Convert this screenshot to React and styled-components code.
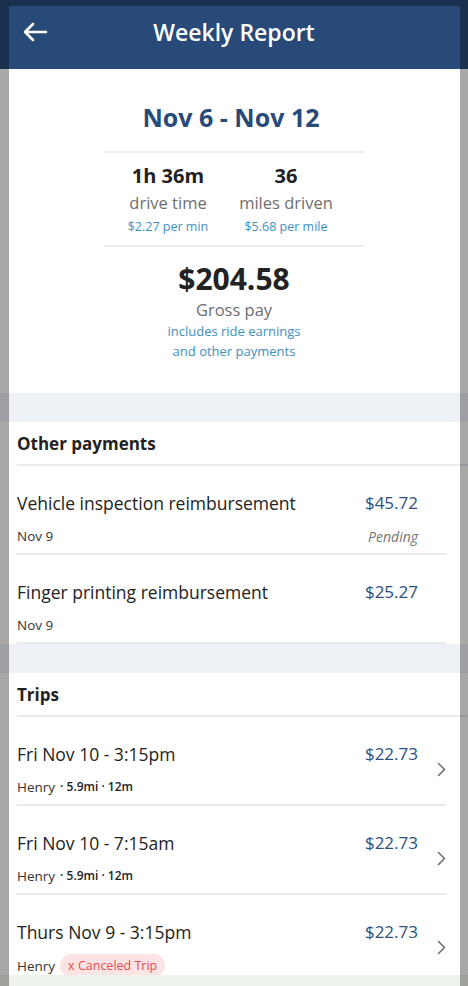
import React from 'react';
import styled, { createGlobalStyle } from 'styled-components';

const GlobalStyle = createGlobalStyle`
  html, body {
    margin: 0;
    padding: 0;
    background: #ffffff;
    font-family: 'Open Sans', 'Noto Sans', sans-serif;
    -webkit-font-smoothing: antialiased;
  }
  * { box-sizing: border-box; }
`;

const Page = styled.div`
  width: 468px;
  min-height: 986px;
  background: #ffffff;
  display: flex;
  flex-direction: column;
`;

const Header = styled.header`
  height: 69px;
  padding-bottom: 6px;
  background: #284a78;
  display: flex;
  align-items: center;
`;

const BackButton = styled.button`
  border: 0;
  background: none;
  padding: 0;
  margin-left: 22px;
  width: 26px;
  height: 26px;
  display: flex;
  align-items: center;
  justify-content: center;
  cursor: pointer;
`;

const HeaderTitle = styled.h1`
  flex: 1;
  margin: 0 48px 0 0;
  text-align: center;
  color: #ffffff;
  font-size: 23px;
  font-weight: 600;
`;

const Summary = styled.section`
  display: flex;
  flex-direction: column;
  align-items: center;
  padding: 31px 0 32px;
`;

const DateRange = styled.h2`
  margin: 0 6px 17px 0;
  color: #284a78;
  font-size: 25px;
  font-weight: 700;
  line-height: 34px;
`;

const Divider = styled.div`
  width: 260px;
  height: 2px;
  background: #eceef1;
`;

const Stats = styled.div`
  display: flex;
  justify-content: center;
  gap: 14px;
  padding: 10px 14px 8px 0;
  width: 260px;
`;

const Stat = styled.div`
  display: flex;
  flex-direction: column;
  align-items: center;
  width: 104px;
`;

const StatValue = styled.div`
  font-size: 20px;
  font-weight: 700;
  color: #222222;
  line-height: 26px;
`;

const StatLabel = styled.div`
  font-size: 16.5px;
  font-weight: 500;
  color: #6e6e6e;
  line-height: 28px;
`;

const Note = styled.div`
  font-size: ${p => (p.$small ? '12.5px' : '13px')};
  color: #3d8fc2;
  line-height: 20px;
`;

const GrossValue = styled.div`
  margin-top: 12px;
  font-size: 30px;
  font-weight: 700;
  color: #222222;
  line-height: 40px;
`;

const GrossLabel = styled.div`
  font-size: 16.5px;
  font-weight: 500;
  color: #6e6e6e;
  line-height: 22px;
`;

const Band = styled.div`
  height: 29px;
  background: #eef2f7;
`;

const SectionTitle = styled.h3`
  margin: 0 0 0 17px;
  height: 44px;
  display: flex;
  align-items: center;
  font-size: 17px;
  font-weight: 700;
  color: #222222;
  border-bottom: 2px solid #e8eaee;
`;

const Row = styled.div`
  margin: 0 22px 0 17px;
  height: 89px;
  padding-top: 25px;
  display: flex;
  align-items: flex-start;
  border-bottom: ${p => (p.$last ? 'none' : '2px solid #e8eaee')};
`;

const RowBody = styled.div`
  flex: 1;
  display: flex;
  flex-direction: column;
  gap: 10px;
`;

const Line = styled.div`
  display: flex;
  justify-content: space-between;
  align-items: center;
`;

const RowTitle = styled.div`
  font-size: 17.5px;
  color: #222222;
  line-height: 24px;
`;

const Amount = styled.div`
  font-size: 17px;
  color: #2c4f80;
  line-height: 24px;
`;

const SubText = styled.div`
  font-size: 13.5px;
  color: #333333;
  line-height: 22px;
  display: flex;
  align-items: center;
  gap: 5px;
`;

const Meta = styled.span`
  font-size: 12px;
  font-weight: 600;
  color: #222222;
`;

const Status = styled.div`
  font-size: 14px;
  font-style: italic;
  color: #767676;
`;

const Badge = styled.span`
  background: #fde3e3;
  color: #ec4b4e;
  border-radius: 12px;
  padding: 2px 8px;
  font-size: 12.5px;
  line-height: 19px;
`;

const Chevron = styled.div`
  width: 9px;
  margin-left: 19px;
  margin-top: 20px;
  display: flex;
  justify-content: flex-end;
`;

const Dim = styled.div`
  position: fixed;
  inset: 0;
  pointer-events: none;
  border-style: solid;
  border-color: rgba(0, 0, 0, 0.34);
  border-width: 6px 8px 0 9px;
`;

const BottomSheet = styled.div`
  position: fixed;
  left: 0;
  right: 0;
  bottom: 0;
  height: 11px;
  background: #eef3ec;
`;

const payments = [
  { title: 'Vehicle inspection reimbursement', amount: '$45.72', date: 'Nov 9', status: 'Pending' },
  { title: 'Finger printing reimbursement', amount: '$25.27', date: 'Nov 9' },
];

const trips = [
  { title: 'Fri Nov 10 - 3:15pm', amount: '$22.73', rider: 'Henry', meta: '· 5.9mi · 12m' },
  { title: 'Fri Nov 10 - 7:15am', amount: '$22.73', rider: 'Henry', meta: '· 5.9mi · 12m' },
  { title: 'Thurs Nov 9 - 3:15pm', amount: '$22.73', rider: 'Henry', canceled: true },
];

const ArrowLeft = () => (
  <svg width="26" height="20" viewBox="0 0 26 20" fill="none">
    <path d="M24 10H3M11 2L3 10l8 8" stroke="#fff" strokeWidth="2.6" strokeLinecap="round" strokeLinejoin="round" />
  </svg>
);

const ChevronRight = () => (
  <svg width="9" height="15" viewBox="0 0 9 15" fill="none">
    <path d="M1.5 1.5l6 6-6 6" stroke="#6f6f6f" strokeWidth="1.6" strokeLinecap="round" strokeLinejoin="round" />
  </svg>
);

export default function App() {
  return (
    <>
      <GlobalStyle />
      <Page>
        <Header>
          <BackButton aria-label="back">
            <ArrowLeft />
          </BackButton>
          <HeaderTitle>Weekly Report</HeaderTitle>
        </Header>

        <Summary>
          <DateRange>Nov 6 - Nov 12</DateRange>
          <Divider />
          <Stats>
            <Stat>
              <StatValue>1h 36m</StatValue>
              <StatLabel>drive time</StatLabel>
              <Note $small>$2.27 per min</Note>
            </Stat>
            <Stat>
              <StatValue>36</StatValue>
              <StatLabel>miles driven</StatLabel>
              <Note $small>$5.68 per mile</Note>
            </Stat>
          </Stats>
          <Divider />
          <GrossValue>$204.58</GrossValue>
          <GrossLabel>Gross pay</GrossLabel>
          <Note>includes ride earnings</Note>
          <Note>and other payments</Note>
        </Summary>

        <Band />
        <SectionTitle>Other payments</SectionTitle>
        {payments.map(p => (
          <Row key={p.title}>
            <RowBody>
              <Line>
                <RowTitle>{p.title}</RowTitle>
                <Amount>{p.amount}</Amount>
              </Line>
              <Line>
                <SubText>{p.date}</SubText>
                {p.status && <Status>{p.status}</Status>}
              </Line>
            </RowBody>
            <Chevron />
          </Row>
        ))}

        <Band />
        <SectionTitle>Trips</SectionTitle>
        {trips.map((t, i) => (
          <Row key={t.title} $last={i === trips.length - 1}>
            <RowBody>
              <Line>
                <RowTitle>{t.title}</RowTitle>
                <Amount>{t.amount}</Amount>
              </Line>
              <SubText>
                {t.rider}
                {t.meta && <Meta>{t.meta}</Meta>}
                {t.canceled && <Badge>x Canceled Trip</Badge>}
              </SubText>
            </RowBody>
            <Chevron>
              <ChevronRight />
            </Chevron>
          </Row>
        ))}
      </Page>
      <BottomSheet />
      <Dim />
    </>
  );
}
